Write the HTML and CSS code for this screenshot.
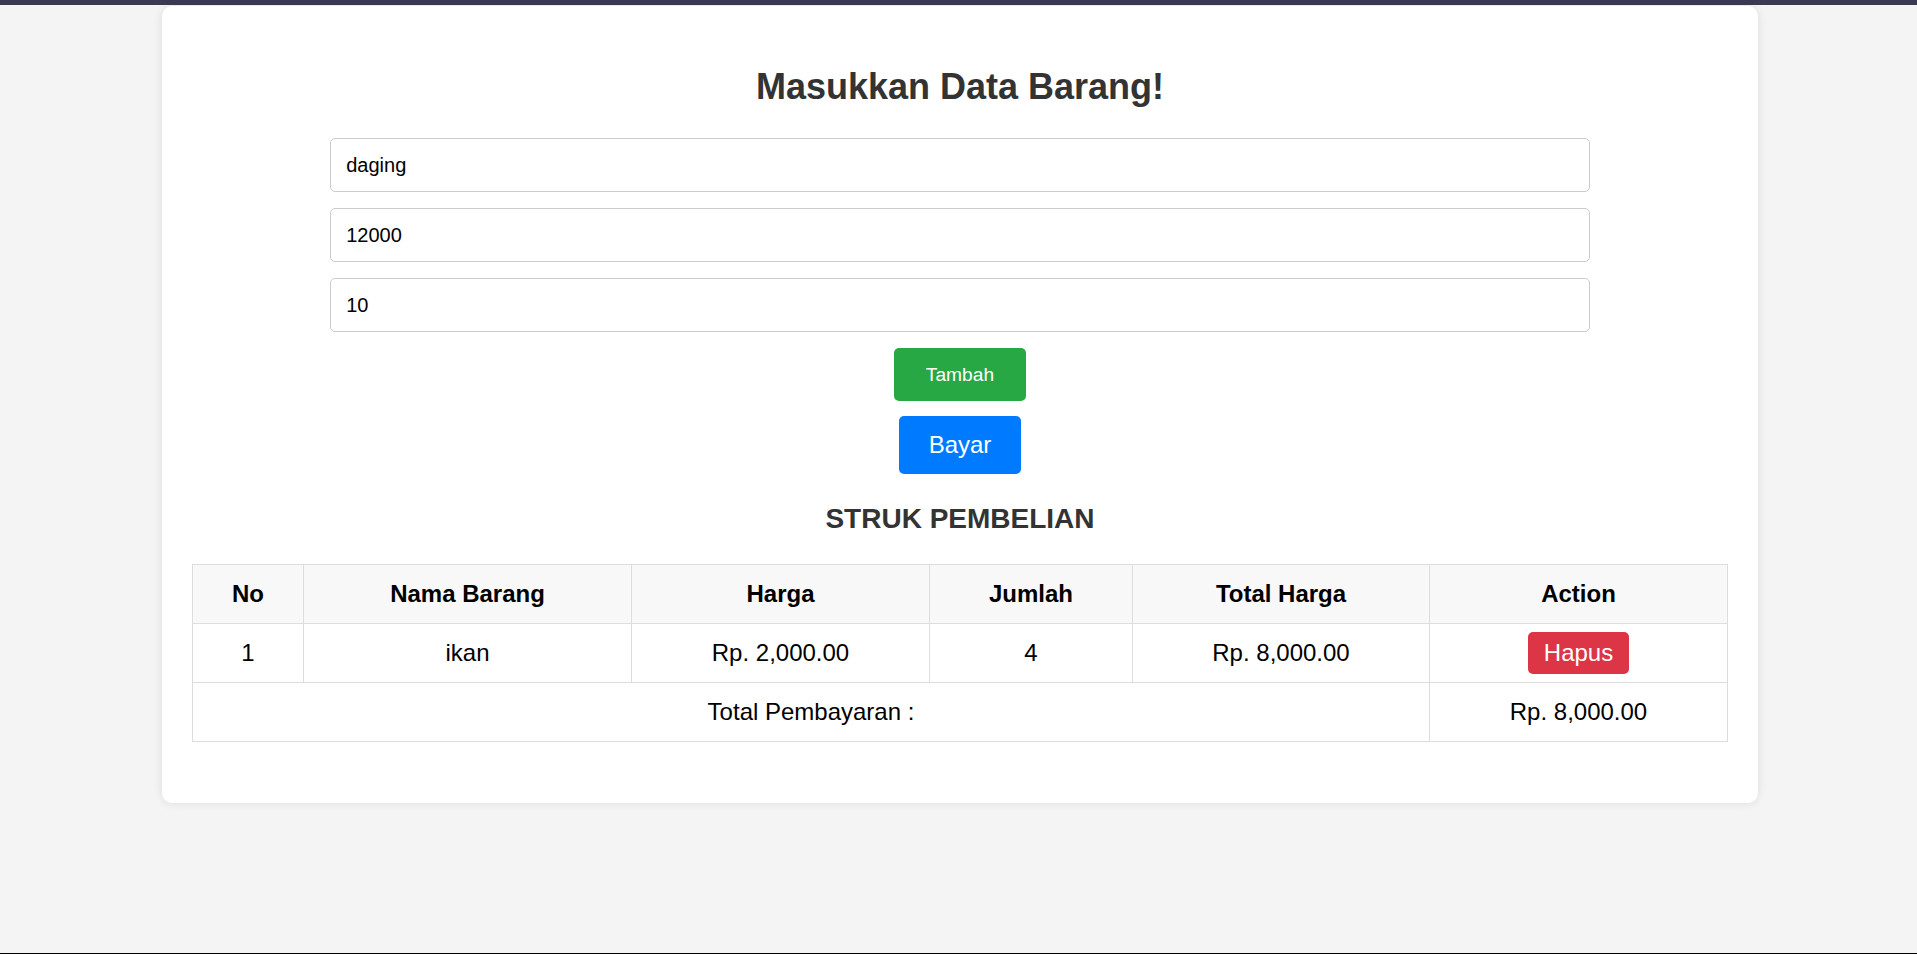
FILE: index.html
```html
<!DOCTYPE html>
<html lang="id">
<head>
<meta charset="utf-8">
<title>Struk Pembelian</title>
<link rel="stylesheet" href="styles.css">
</head>
<body>
<div class="page">
  <main class="card">
    <h1 class="title">Masukkan Data Barang!</h1>
    <form class="form">
      <input class="field" type="text" value="daging">
      <input class="field" type="text" value="12000">
      <input class="field" type="text" value="10">
      <button type="button" class="btn btn-add">Tambah</button>
      <button type="button" class="btn btn-pay">Bayar</button>
    </form>
    <h2 class="subtitle">STRUK PEMBELIAN</h2>
    <table class="receipt">
      <colgroup>
        <col class="c-no"><col class="c-name"><col class="c-price"><col class="c-qty"><col class="c-total"><col class="c-action">
      </colgroup>
      <thead>
        <tr><th>No</th><th>Nama Barang</th><th>Harga</th><th>Jumlah</th><th>Total Harga</th><th>Action</th></tr>
      </thead>
      <tbody>
        <tr><td>1</td><td>ikan</td><td>Rp. 2,000.00</td><td>4</td><td>Rp. 8,000.00</td><td><button type="button" class="btn-del">Hapus</button></td></tr>
        <tr><td colspan="5">Total Pembayaran :</td><td>Rp. 8,000.00</td></tr>
      </tbody>
    </table>
  </main>
</div>
</body>
</html>
```
FILE: styles.css
```css
html, body {
  margin: 0;
  padding: 0;
}
body {
  background: #f4f4f4;
  font-family: "Liberation Sans", Arial, sans-serif;
}
.page {
  min-height: 100vh;
  box-sizing: border-box;
  border-top: 5px solid #3b3a52;
  border-bottom: 1px solid #000;
  padding: 1px 0 0 3px;
}
.card {
  width: 1596px;
  box-sizing: border-box;
  margin: 0 auto;
  background: #fff;
  border-radius: 10px;
  box-shadow: 0 0 10px rgba(0, 0, 0, 0.1);
  padding: 60px 30px 61px;
}
.title {
  margin: 0 0 31px;
  text-align: center;
  font-size: 36px;
  font-weight: bold;
  color: #333;
  line-height: 41px;
}
.form {
  display: flex;
  flex-direction: column;
  align-items: center;
  gap: 16px;
}
.field {
  width: 82%;
  height: 54px;
  box-sizing: border-box;
  border: 1px solid #ccc;
  border-radius: 5px;
  padding: 0 15px;
  font-family: "Liberation Sans", Arial, sans-serif;
  font-size: 20px;
  color: #000;
  background: #fff;
}
.btn {
  border: none;
  color: #fff;
  font-family: "Liberation Sans", Arial, sans-serif;
  border-radius: 5px;
  cursor: pointer;
}
.btn-add {
  width: 132px;
  height: 53px;
  background: #28a745;
  font-size: 19.2px;
}
.btn-pay {
  width: 122px;
  height: 58px;
  margin-top: -1px;
  background: #007bff;
  font-size: 24px;
}
.subtitle {
  margin: 29px 0 29px;
  text-align: center;
  font-size: 28px;
  line-height: 32px;
  font-weight: bold;
  color: #333;
}
.receipt {
  width: 100%;
  border-collapse: collapse;
  font-size: 24px;
  color: #000;
  table-layout: fixed;
}
.c-no { width: 111px; }
.c-name { width: 328px; }
.c-price { width: 298px; }
.c-qty { width: 203px; }
.c-total { width: 297px; }
.c-action { width: 298px; }
.receipt th,
.receipt td {
  border: 1px solid #ddd;
  text-align: center;
  vertical-align: middle;
  padding: 8px;
  line-height: 42px;
}
.receipt th {
  background: #f8f8f8;
  font-weight: bold;
}
.btn-del {
  display: inline-block;
  vertical-align: top;
  height: 42px;
  padding: 0 16px;
  border: none;
  border-radius: 5px;
  background: #dc3545;
  color: #fff;
  font-family: "Liberation Sans", Arial, sans-serif;
  font-size: 24px;
  line-height: 42px;
  cursor: pointer;
}
```
